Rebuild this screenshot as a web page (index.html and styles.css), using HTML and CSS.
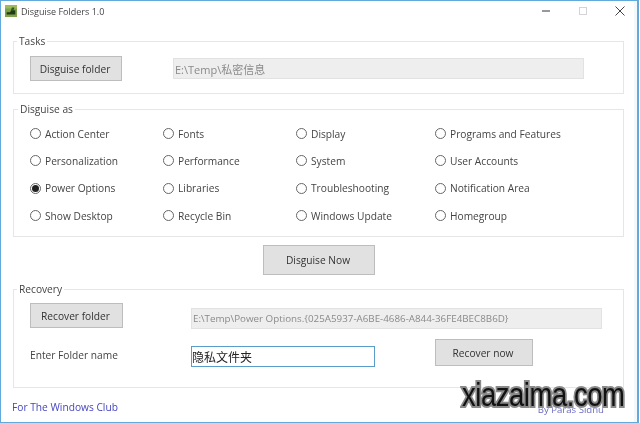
FILE: index.html
```html
<!DOCTYPE html>
<html lang="en">
<head>
<meta charset="utf-8">
<title>Disguise Folders 1.0</title>
<link rel="stylesheet" href="styles.css">
</head>
<body>
<div class="window">
  <header class="titlebar">
    <svg class="app-icon" width="12" height="12" viewBox="0 0 14 14"><rect width="14" height="14" fill="#7fa34a"/><path d="M0 0h14v4H0z" fill="#9dbb5c"/><path d="M2 8.500h4l1-2.500h5v5H2z" fill="#1f3a16"/><path d="M8 3l3 0-1 3H7z" fill="#2e5a20"/></svg>
    <span class="title">Disguise Folders 1.0</span>
    <div class="controls">
      <svg width="10" height="10" viewBox="0 0 10 10"><path d="M1 5h8" stroke="#555" stroke-width="1.200"/></svg>
      <svg width="10" height="10" viewBox="0 0 10 10"><rect x="1.500" y="1.500" width="7" height="7" fill="none" stroke="#d4d4d4"/></svg>
      <svg width="10" height="10" viewBox="0 0 10 10"><path d="M.5.500l9 9M9.500.500l-9 9" stroke="#444" stroke-width="1"/></svg>
    </div>
  </header>

  <fieldset class="group tasks">
    <legend>Tasks</legend>
    <div class="row">
      <button class="btn btn-disguise">Disguise folder</button>
      <input class="path path-tasks" value="E:\Temp\私密信息" disabled>
    </div>
  </fieldset>

  <fieldset class="group options">
    <legend class="legend-as">Disguise as</legend>
    <div class="grid">
      <label class="opt"><span class="radio"></span>Action Center</label>
      <label class="opt"><span class="radio"></span>Fonts</label>
      <label class="opt"><span class="radio"></span>Display</label>
      <label class="opt"><span class="radio"></span>Programs and Features</label>
      <label class="opt"><span class="radio"></span>Personalization</label>
      <label class="opt"><span class="radio"></span>Performance</label>
      <label class="opt"><span class="radio"></span>System</label>
      <label class="opt"><span class="radio"></span>User Accounts</label>
      <label class="opt"><span class="radio checked"></span>Power Options</label>
      <label class="opt"><span class="radio"></span>Libraries</label>
      <label class="opt"><span class="radio"></span>Troubleshooting</label>
      <label class="opt"><span class="radio"></span>Notification Area</label>
      <label class="opt"><span class="radio"></span>Show Desktop</label>
      <label class="opt"><span class="radio"></span>Recycle Bin</label>
      <label class="opt"><span class="radio"></span>Windows Update</label>
      <label class="opt"><span class="radio"></span>Homegroup</label>
    </div>
  </fieldset>

  <div class="now-row"><button class="btn btn-now">Disguise Now</button></div>

  <fieldset class="group recovery">
    <legend>Recovery</legend>
    <div class="rec-top">
      <button class="btn btn-recover">Recover folder</button>
      <input class="path path-rec" value="E:\Temp\Power Options.{025A5937-A6BE-4686-A844-36FE4BEC8B6D}" disabled>
    </div>
    <div class="rec-bottom">
      <span class="name-label">Enter Folder name</span>
      <input class="name-input" value="隐私文件夹">
      <button class="btn btn-recnow">Recover now</button>
    </div>
  </fieldset>

  <footer class="foot">
    <span>For The Windows Club</span>
    <span class="by">By Paras Sidhu</span>
  </footer>
  <div class="watermark">xiazaima.com</div>
</div>
</body>
</html>
```
FILE: styles.css
```css
* { box-sizing: border-box; }
html, body { margin: 0; padding: 0; }
body {
  width: 640px; height: 423px; overflow: hidden; background: #fff;
  font-family: "Open Sans", "Noto Sans CJK SC", sans-serif;
  font-size: 10.200px; color: #333;
}
.window {
  position: relative; width: 639px; height: 423px;
  border: 1px solid #62a9dc; border-right-width: 2px;
  box-shadow: inset -3px 0 0 #f3f8fb;
  display: flex; flex-direction: column;
  padding: 0 13px 0 12px;
  filter: blur(.3px);
}
.titlebar { display: flex; align-items: center; height: 19px; margin: 0 -8px 0 -8px; padding-top: 1px; }
.app-icon { margin-right: 4px; }
.title { font-size: 9px; color: #444; }
.controls { margin-left: auto; display: flex; gap: 27px; margin-right: 7px; align-items: center; }
.group { border: 1px solid #e6e6e6; margin: 0; padding: 0; min-width: 0; }
.group legend { padding: 0 2px; margin-left: 3px; font-size: 10.200px; color: #444; line-height: 14px; }
.tasks { margin-top: 14px; height: 60px; }
.row { display: flex; align-items: center; padding: 8px 0 0 16px; }
.btn {
  font: inherit; color: #333; background: #e1e1e1; border: 1px solid #bdbdbd; padding: 0 2px 0 0;
}
.btn-disguise { width: 92px; height: 25px; }
.path {
  font: inherit; font-size: 10.500px; height: 21px; padding: 0 1px; background: #eee; color: #888;
  border: 1px solid #e2e2e2; -webkit-text-fill-color: #8a8a8a; opacity: 1;
}
.path-tasks { margin-left: 51px; width: 411px; font-size: 11px; }
.options { margin-top: 8px; height: 135px; }
.group .legend-as { margin-left: 4px; }
.grid {
  display: grid; grid-template-columns: 133px 133px 139px 1fr; grid-auto-rows: 27.300px;
  padding: 4px 0 0 16px;
}
.opt { display: flex; align-items: center; gap: 4px; color: #444; }
.radio { width: 11px; height: 11px; border: 1px solid #666; border-radius: 50%; background: #fff; display: flex; align-items: center; justify-content: center; flex: none; }
.checked::after { content: ""; width: 7px; height: 7px; border-radius: 50%; background: #222; }
.now-row { display: flex; justify-content: flex-start; padding: 8px 0 0 250px; }
.btn-now { width: 112px; height: 30px; }
.recovery { margin-top: 7px; height: 106px; }
.rec-top { display: flex; align-items: flex-start; padding: 7px 0 0 16px; }
.btn-recover { width: 93px; height: 25px; }
.path-rec { margin: 5px 0 0 68px; width: 411px; font-size: 9.800px; }
.rec-bottom { display: flex; align-items: flex-start; padding: 10px 0 0 16px; }
.name-label { width: 161px; padding-top: 9px; color: #444; }
.name-input {
  width: 184px; height: 21px; font: inherit; font-size: 12px; color: #222; padding: 0;
  border: 1px solid #5a9cca; background: #fff; outline: none; margin-top: 7px;
}
.btn-recnow { width: 98px; height: 27px; margin-left: 60px; }
.foot { display: flex; justify-content: space-between; color: #4545c0; margin: 12px 20px 0 -1px; line-height: 14px; }
.by { font-size: 9.600px; color: #6a6ac0; padding-top: 3px; }
.watermark {
  position: absolute; left: 461px; top: 375px;
  font-family: "Liberation Sans", sans-serif; font-size: 33px; line-height: 38px;
  letter-spacing: -.5px;
  transform: scaleX(.83); transform-origin: left top; white-space: nowrap;
  color: #111;
  -webkit-text-stroke: 4px #8a8a8a; paint-order: stroke fill;
  filter: drop-shadow(0 0 1px #fff);
}
```
